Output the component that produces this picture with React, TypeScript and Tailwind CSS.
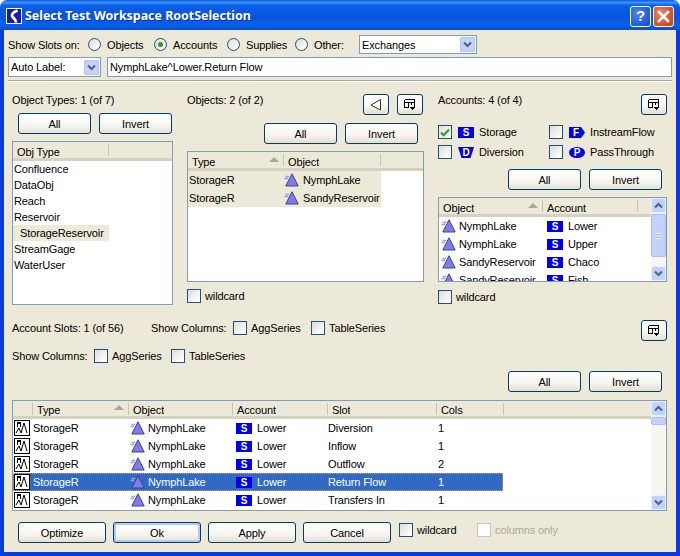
import React from "react";

const font = "font-['Liberation_Sans','Noto_Sans',sans-serif] text-[11px] tracking-[-0.12px] leading-[14px] text-black";

function Btn({ w = "w-[73px]", children, def }: { w?: string; children?: React.ReactNode; def?: boolean }) {
  return (
    <div className={`${w} h-[21px] shrink-0 flex items-center justify-center rounded-[3px] border border-[#003c74] bg-[linear-gradient(180deg,#ffffff_0%,#f6f5ef_60%,#e3e0d2_100%)] ${def ? "shadow-[inset_0_0_0_2px_#b3cbf0]" : ""}`}>
      {children}
    </div>
  );
}

function TableMenuIcon() {
  return (
    <svg width="12" height="12" viewBox="0 0 12 12" shapeRendering="crispEdges">
      <path d="M0.5 0.5H10.5V8.5H6M0.5 0.5V8.5H4M0.5 3.5H10.5M4 3.5V8.5M7 3.5V6" fill="none" stroke="#000" />
      <path d="M5 8H11L8 11Z" fill="#000" />
    </svg>
  );
}

function LeftTriIcon() {
  return (
    <svg width="12" height="12" viewBox="0 0 12 12">
      <path d="M10.5 0.5V11L1 6Z" fill="#fff" stroke="#333" strokeWidth="1" />
    </svg>
  );
}

function IconBtn({ children }: { children: React.ReactNode }) {
  return <Btn w="w-[26px]">{children}</Btn>;
}

function Radio({ on }: { on?: boolean }) {
  return (
    <div className="w-[13px] h-[13px] shrink-0 rounded-full border border-[#1c5180] bg-[linear-gradient(135deg,#dcdcd7_0%,#ffffff_90%)] flex items-center justify-center">
      {on && <div className="w-[5px] h-[5px] rounded-full bg-[#21a121]" />}
    </div>
  );
}

function Check({ on, disabled }: { on?: boolean; disabled?: boolean }) {
  return (
    <div className={`w-[14px] h-[14px] shrink-0 border flex items-center justify-center ${disabled ? "border-[#cac8bb] bg-white" : "border-[#1c5180] bg-[linear-gradient(135deg,#dcdcd7_0%,#ffffff_90%)]"}`}>
      {on && (
        <svg width="10" height="9" viewBox="0 0 10 9">
          <path d="M1 4.5L3.7 7.2L9 1.5" fill="none" stroke="#21a121" strokeWidth="2" />
        </svg>
      )}
    </div>
  );
}

function Chevron({ up, className = "" }: { up?: boolean; className?: string }) {
  return (
    <svg width="9" height="7" viewBox="0 0 9 7" className={className}>
      <path d={up ? "M1 5.5L4.5 2L8 5.5" : "M1 1.5L4.5 5L8 1.5"} fill="none" stroke="#4d6185" strokeWidth="2" />
    </svg>
  );
}

function ComboArrow() {
  return (
    <div className="w-[15px] h-[15px] shrink-0 rounded-[1px] border border-[#b5c8f0] bg-[#c1d3fb] flex items-center justify-center">
      <Chevron />
    </div>
  );
}

function SBadge() {
  return (
    <svg width="16" height="11" viewBox="0 0 16 11" className="shrink-0 block">
      <rect width="16" height="11" fill="#0000ee" />
      <text x="8" y="9" textAnchor="middle" fontSize="10" fontWeight="700" fill="#fff" fontFamily="'Liberation Sans',sans-serif">S</text>
    </svg>
  );
}

function DBadge() {
  return (
    <svg width="16" height="11" viewBox="0 0 16 11" className="shrink-0 block">
      <path d="M0 0H16L12.5 11H3.5Z" fill="#0000ee" />
      <text x="8" y="9" textAnchor="middle" fontSize="10" fontWeight="700" fill="#fff" fontFamily="'Liberation Sans',sans-serif">D</text>
    </svg>
  );
}

function FBadge() {
  return (
    <svg width="16" height="11" viewBox="0 0 16 11" className="shrink-0 block">
      <path d="M0 0H12L16 5.5L12 11H0Z" fill="#0000ee" />
      <text x="7" y="9" textAnchor="middle" fontSize="10" fontWeight="700" fill="#fff" fontFamily="'Liberation Sans',sans-serif">F</text>
    </svg>
  );
}

function PBadge() {
  return (
    <svg width="16" height="11" viewBox="0 0 16 11" className="shrink-0 block">
      <ellipse cx="8" cy="5.5" rx="8" ry="5.5" fill="#0000ee" />
      <text x="8" y="9" textAnchor="middle" fontSize="10" fontWeight="700" fill="#fff" fontFamily="'Liberation Sans',sans-serif">P</text>
    </svg>
  );
}

function Tri() {
  return (
    <svg width="15" height="14" viewBox="0 0 15 14" className="shrink-0 block">
      <path d="M0.5 5.5H4M1.5 3.5H5" stroke="#9a9aee" strokeWidth="1.4" />
      <path d="M8 0.8L14.2 13H1.8Z" fill="#7d7df2" stroke="#44447a" strokeWidth="1" />
    </svg>
  );
}

function Wave() {
  return (
    <svg width="16" height="16" viewBox="0 0 16 16" className="shrink-0 block" shapeRendering="crispEdges">
      <rect x="0.5" y="0.5" width="15" height="15" fill="#fff" stroke="#000" />
      <path d="M3 7V2H4V3H5V2H6V7" fill="none" stroke="#000" />
      <path d="M2 13L5 8L7 13L10 3L13 13" fill="none" stroke="#000" shapeRendering="auto" />
    </svg>
  );
}

function HeadCell({ w, children, sort }: { w: string; children?: React.ReactNode; sort?: boolean }) {
  return (
    <div className={`${w} h-full shrink-0 flex items-center relative pl-[4px] pt-[3px]`}>
      <span className="truncate">{children}</span>
      {sort && (
        <div className="ml-auto mr-[5px] mb-[5px] w-0 h-0 border-l-[5px] border-r-[5px] border-b-[5px] border-l-transparent border-r-transparent border-b-[#aca899]" />
      )}
      <div className="w-[1px] h-[12px] bg-[#c7c5b2] absolute right-0 top-[2px]" />
    </div>
  );
}

function Header({ children, className = "h-[19px]" }: { children: React.ReactNode; className?: string }) {
  return (
    <div className={`shrink-0 flex bg-[#ece9d8] border-b-[3px] border-[#d6d2c2] ${className}`}>
      {children}
    </div>
  );
}

function VScroll({ small }: { small?: boolean }) {
  return (
    <div className="w-[15px] h-full shrink-0 flex flex-col bg-[#f6f6f0]">
      <div className="h-[15px] shrink-0 bg-[#c1d3fb] border border-[#e8efff] rounded-[2px] flex items-center justify-center">
        <Chevron up />
      </div>
      <div className={`mt-[1px] shrink-0 bg-[#c1d3fb] border border-[#a9bff0] rounded-[2px] flex items-center justify-center ${small ? "h-[8px]" : "h-[43px]"}`}>
        {!small && (
          <div className="w-[6px] h-[6px] border-y border-[#eef3ff] bg-[linear-gradient(180deg,#8ea6dc_0%,#eef3ff_50%,#8ea6dc_100%)]" />
        )}
      </div>
      <div className="flex-1" />
      <div className="h-[15px] shrink-0 bg-[#c1d3fb] border border-[#e8efff] rounded-[2px] flex items-center justify-center">
        <Chevron />
      </div>
    </div>
  );
}

const tableBorder = "border border-[#7f9db9] bg-white";

function LabeledCheck({ label, className = "", on }: { label: string; className?: string; on?: boolean }) {
  return (
    <div className={`flex items-center gap-[4px] ${className}`}>
      <Check on={on} />
      <span>{label}</span>
    </div>
  );
}

const slots: [string, string, boolean][] = [
  ["Diversion", "1", false],
  ["Inflow", "1", false],
  ["Outflow", "2", false],
  ["Return Flow", "1", true],
  ["Transfers In", "1", false],
];

const objTypes = ["Confluence", "DataObj", "Reach", "Reservoir"];

export default function App() {
  return (
    <div className={`w-[680px] h-[556px] flex flex-col overflow-hidden bg-white ${font}`}>
      {/* title bar */}
      <div className="h-[30px] shrink-0 rounded-t-[7px] flex items-center pl-[6px] pr-[5px] pt-[2px] bg-[linear-gradient(180deg,#0a55e0_0%,#3d95ff_8%,#0a5fec_18%,#0855dd_55%,#0861ec_85%,#0a4ed0_100%)]">
        <svg width="16" height="16" viewBox="0 0 16 16" className="shrink-0">
          <rect width="16" height="16" fill="#fff" />
          <rect x="1" y="1" width="14" height="14" fill="#1818b8" />
          <path d="M11.5 2.5C8 4 5.5 6 6 8C6.5 10 10 10.5 10 14.5" fill="none" stroke="#fff" strokeWidth="2.8" />
        </svg>
        <span className="ml-[3px] text-white font-bold text-[12.5px] font-['Noto_Sans',sans-serif] tracking-[-0.05px] [text-shadow:1px_1px_0_#0a2f9c]">
          Select Test Workspace RootSelection
        </span>
        <div className="ml-auto mr-[1px] flex gap-[2px]">
          <div className="w-[21px] h-[21px] rounded-[3px] border border-white bg-[radial-gradient(circle_at_35%_35%,#4a86f0_0%,#2150d8_80%)] flex items-center justify-center text-white font-bold text-[15px] font-['Liberation_Sans',sans-serif]">?</div>
          <div className="w-[21px] h-[21px] rounded-[3px] border border-white bg-[radial-gradient(circle_at_35%_35%,#ea8565_0%,#d04518_80%)] flex items-center justify-center">
            <svg width="13" height="13" viewBox="0 0 13 13">
              <path d="M2 2L11 11M11 2L2 11" stroke="#fff" strokeWidth="2.6" strokeLinecap="square" />
            </svg>
          </div>
        </div>
      </div>

      {/* body */}
      <div className="flex-1 min-h-0 bg-[#ece9d8] border-x-[4px] border-b-[4px] border-[#0a3bdc] flex flex-col">
        {/* row 1 */}
        <div className="mt-[5px] h-[19px] shrink-0 flex items-center pl-[4px]">
          <span className="w-[80px] shrink-0">Show Slots on:</span>
          <Radio />
          <span className="ml-[6px] w-[47px] shrink-0">Objects</span>
          <Radio on />
          <span className="ml-[6px] w-[54px] shrink-0">Accounts</span>
          <Radio />
          <span className="ml-[6px] w-[49px] shrink-0">Supplies</span>
          <Radio />
          <span className="ml-[6px] w-[45px] shrink-0">Other:</span>
          <div className="w-[118px] h-[19px] shrink-0 bg-white border border-[#7f9db9] flex items-center pl-[2px] pr-[1px]">
            <span>Exchanges</span>
            <div className="ml-auto"><ComboArrow /></div>
          </div>
        </div>
        {/* row 2 */}
        <div className="mt-[3px] h-[20px] shrink-0 flex items-center pl-[4px]">
          <div className="w-[93px] h-[20px] shrink-0 bg-white border border-[#7f9db9] flex items-center pl-[2px] pr-[1px]">
            <span>Auto Label:</span>
            <div className="ml-auto"><ComboArrow /></div>
          </div>
          <div className="ml-[6px] w-[565px] h-[20px] shrink-0 bg-white border border-[#7f9db9] flex items-center pl-[2px]">
            <span>NymphLake^Lower.Return Flow</span>
          </div>
        </div>
        {/* separator */}
        <div className="mt-[3px] mx-[4px] h-[2px] shrink-0 bg-[#aca899] border-b border-white" />

        {/* three columns */}
        <div className="h-[224px] shrink-0 flex pl-[8px]">
          {/* col 1 */}
          <div className="w-[161px] shrink-0 flex flex-col">
            <div className="mt-[11px] h-[14px]">Object Types: 1 (of 7)</div>
            <div className="mt-[6px] flex gap-[8px] pl-[6px]">
              <Btn>All</Btn>
              <Btn>Invert</Btn>
            </div>
            <div className={`mt-[7px] h-[164px] ${tableBorder} flex flex-col`}>
              <Header>
                <HeadCell w="w-[96px]">Obj Type</HeadCell>
              </Header>
              {objTypes.map((t) => (
                <div key={t} className="h-[16px] flex items-center pl-[1px]">{t}</div>
              ))}
              <div className="h-[16px] w-[96px] flex items-center pl-[7px] bg-[#ece9d8]">StorageReservoir</div>
              <div className="h-[16px] flex items-center pl-[1px]">StreamGage</div>
              <div className="h-[16px] flex items-center pl-[1px]">WaterUser</div>
            </div>
          </div>

          {/* col 2 */}
          <div className="ml-[14px] w-[237px] shrink-0 flex flex-col">
            <div className="mt-[12px] flex">
              <div className="mt-[-1px] h-[14px]">Objects: 2 (of 2)</div>
              <div className="ml-auto flex gap-[8px]">
                <IconBtn><LeftTriIcon /></IconBtn>
                <div className="mr-[1px]"><IconBtn><TableMenuIcon /></IconBtn></div>
              </div>
            </div>
            <div className="mt-[8px] flex gap-[8px] pl-[77px]">
              <Btn>All</Btn>
              <Btn>Invert</Btn>
            </div>
            <div className={`mt-[7px] h-[131px] ${tableBorder} flex flex-col`}>
              <Header>
                <HeadCell w="w-[96px]" sort>Type</HeadCell>
                <HeadCell w="w-[97px]">Object</HeadCell>
              </Header>
              {["NymphLake", "SandyReservoir"].map((o) => (
                <div key={o} className="h-[18px] w-[193px] flex items-center bg-[#ece9d8]">
                  <span className="w-[96px] pl-[1px]">StorageR</span>
                  <Tri />
                  <span className="ml-[4px]">{o}</span>
                </div>
              ))}
            </div>
            <LabeledCheck label="wildcard" className="mt-[7px]" />
          </div>

          {/* col 3 */}
          <div className="ml-[14px] w-[229px] shrink-0 flex flex-col">
            <div className="mt-[12px] flex">
              <div className="mt-[-1px] h-[14px]">Accounts: 4 (of 4)</div>
              <div className="ml-auto"><IconBtn><TableMenuIcon /></IconBtn></div>
            </div>
            <div className="mt-[10px] grid grid-cols-[111px_1fr] gap-y-[6px]">
              <div className="flex items-center"><Check on /><span className="ml-[6px]"><SBadge /></span><span className="ml-[5px]">Storage</span></div>
              <div className="flex items-center"><Check /><span className="ml-[6px]"><FBadge /></span><span className="ml-[5px]">InstreamFlow</span></div>
              <div className="flex items-center"><Check /><span className="ml-[6px]"><DBadge /></span><span className="ml-[5px]">Diversion</span></div>
              <div className="flex items-center"><Check /><span className="ml-[6px]"><PBadge /></span><span className="ml-[5px]">PassThrough</span></div>
            </div>
            <div className="mt-[10px] flex gap-[8px] pl-[70px]">
              <Btn>All</Btn>
              <Btn>Invert</Btn>
            </div>
            <div className={`mt-[7px] h-[85px] ${tableBorder} flex overflow-hidden`}>
              <div className="flex-1 min-w-0 flex flex-col">
                <div className="w-[212px]">
                  <Header>
                    <HeadCell w="w-[104px]" sort>Object</HeadCell>
                    <HeadCell w="w-[95px]">Account</HeadCell>
                  </Header>
                </div>
                {[["NymphLake", "Lower"], ["NymphLake", "Upper"], ["SandyReservoir", "Chaco"], ["SandyReservoir", "Fish"]].map(([o, a]) => (
                  <div key={a} className="h-[18px] shrink-0 flex items-center pl-[2px]">
                    <Tri />
                    <span className="ml-[3px] w-[88px] shrink-0">{o}</span>
                    <SBadge />
                    <span className="ml-[5px]">{a}</span>
                  </div>
                ))}
              </div>
              <VScroll />
            </div>
            <LabeledCheck label="wildcard" className="mt-[8px]" />
          </div>
        </div>

        {/* account slots */}
        <div className="mt-[14px] h-[21px] shrink-0 flex pl-[8px]">
          <span className="w-[139px] shrink-0 mt-[1px]">Account Slots: 1 (of 56)</span>
          <span className="w-[82px] shrink-0 mt-[1px]">Show Columns:</span>
          <LabeledCheck label="AggSeries" className="w-[78px] shrink-0 h-[14px] mt-[1px]" />
          <LabeledCheck label="TableSeries" className="w-[100px] shrink-0 h-[14px] mt-[1px]" />
          <div className="ml-[230px]"><IconBtn><TableMenuIcon /></IconBtn></div>
        </div>
        <div className="mt-[8px] h-[14px] shrink-0 flex pl-[8px]">
          <span className="w-[82px] shrink-0">Show Columns:</span>
          <LabeledCheck label="AggSeries" className="w-[77px] shrink-0" />
          <LabeledCheck label="TableSeries" className="w-[100px] shrink-0" />
        </div>
        <div className="mt-[8px] flex gap-[8px] pl-[504px] shrink-0">
          <Btn>All</Btn>
          <Btn>Invert</Btn>
        </div>

        {/* slots table */}
        <div className={`mt-[8px] ml-[8px] w-[655px] h-[111px] shrink-0 ${tableBorder} flex overflow-hidden`}>
          <div className="flex-1 min-w-0 flex flex-col">
            <div className="w-[639px]">
              <Header className="h-[18px]">
                <HeadCell w="w-[20px]" />
                <HeadCell w="w-[96px]" sort>Type</HeadCell>
                <HeadCell w="w-[104px]">Object</HeadCell>
                <HeadCell w="w-[95px]">Account</HeadCell>
                <HeadCell w="w-[109px]">Slot</HeadCell>
                <HeadCell w="w-[67px]">Cols</HeadCell>
              </Header>
            </div>
            {slots.map(([s, c, sel]) => (
              <div
                key={s}
                className={`h-[18px] w-[490px] shrink-0 flex items-center ${sel ? "bg-[#316ac5] text-white outline-1 outline-dotted -outline-offset-1 outline-[#e0a030]" : ""}`}
              >
                <span className="ml-[1px]"><Wave /></span>
                <span className="ml-[3px] w-[97px] shrink-0">StorageR</span>
                <Tri />
                <span className="ml-[3px] w-[88px] shrink-0">NymphLake</span>
                <SBadge />
                <span className="ml-[5px] w-[71px] shrink-0">Lower</span>
                <span className="w-[110px] shrink-0">{s}</span>
                <span>{c}</span>
              </div>
            ))}
          </div>
          <VScroll small />
        </div>

        {/* bottom */}
        <div className="mt-[11px] flex items-start pl-[14px]">
          <Btn w="w-[88px]">Optimize</Btn>
          <div className="ml-[7px]"><Btn w="w-[88px]" def>Ok</Btn></div>
          <div className="ml-[7px]"><Btn w="w-[88px]">Apply</Btn></div>
          <div className="ml-[7px]"><Btn w="w-[88px]">Cancel</Btn></div>
          <div className="ml-[8px] w-[78px] shrink-0 flex items-center gap-[4px] mt-[1px]">
            <Check />
            <span>wildcard</span>
          </div>
          <div className="flex items-center gap-[4px] mt-[1px] text-[#aca899]">
            <Check disabled />
            <span>columns only</span>
          </div>
        </div>
      </div>
    </div>
  );
}
